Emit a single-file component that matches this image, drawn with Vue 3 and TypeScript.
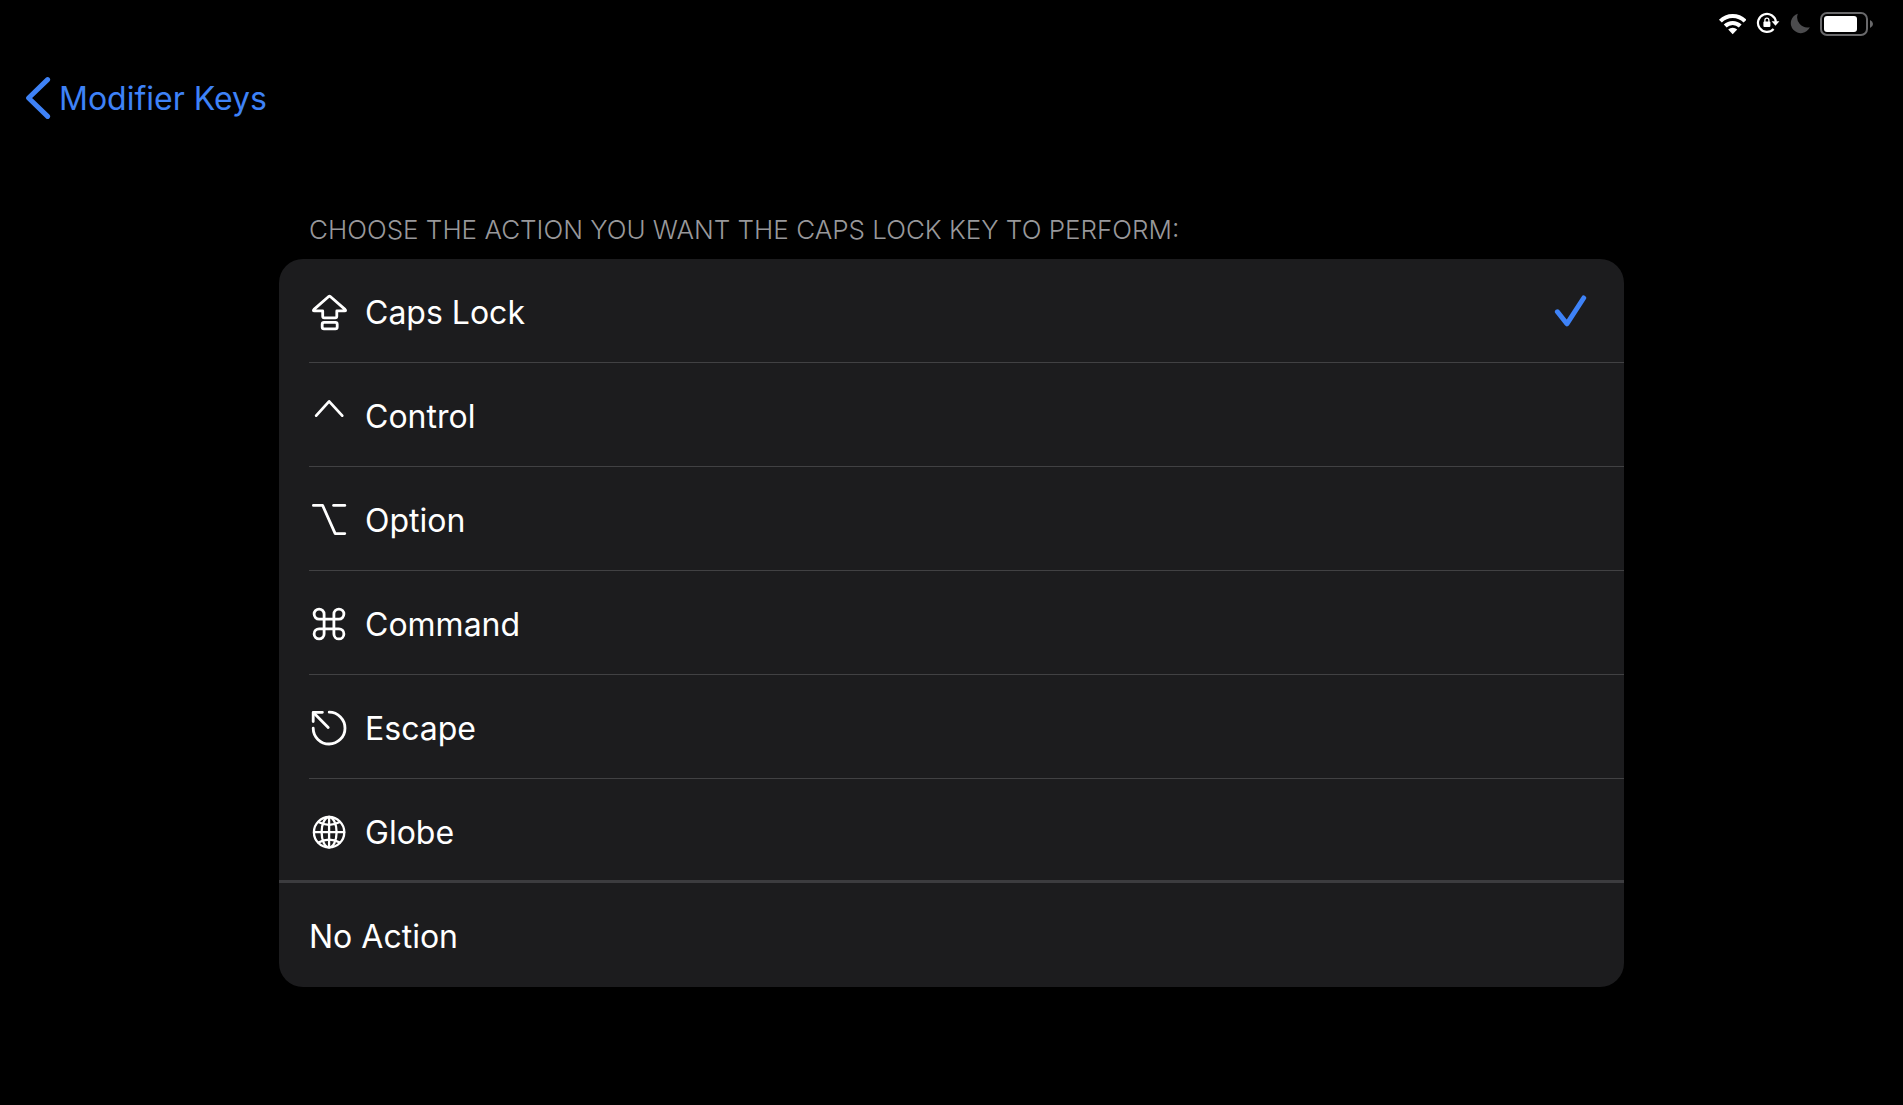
<script setup lang="ts">
import { ref } from 'vue'

interface Action {
  id: string
  label: string
  paths: string[]
}

const actions: Action[] = [
  {
    id: 'caps-lock',
    label: 'Caps Lock',
    paths: [
      'M19.7 4.5Q20.5 3.8 21.3 4.5L36 17.4Q37.4 18.9 35.6 18.9H27.8V24.2Q27.8 25.8 26.2 25.8H15.3Q13.7 25.8 13.7 24.2V18.9H5.4Q3.6 18.9 5 17.4Z',
      'M15 30.4H26.4Q28.2 30.4 28.2 32.2V35Q28.2 36.8 26.4 36.8H15Q13.2 36.8 13.2 35V32.2Q13.2 30.4 15 30.4Z',
    ],
  },
  { id: 'control', label: 'Control', paths: ['M7.2 19.6L20.1 5.4L33.2 19.6'] },
  { id: 'option', label: 'Option', paths: ['M4.4 5.4H13.6L26.2 33.6H35.8', 'M24.6 5.4H35.8'] },
  {
    id: 'command',
    label: 'Command',
    paths: [
      'M15.1 10.1V29.9A5 5 0 1 1 10.1 24.9H29.9A5 5 0 1 1 24.9 29.9V10.1A5 5 0 1 1 29.9 15.1H10.1A5 5 0 1 1 15.1 10.1Z',
    ],
  },
  {
    id: 'escape',
    label: 'Escape',
    paths: ['M20.2 4.2A15.9 15.9 0 1 1 4.2 20.2', 'M19.2 19.6L4.6 4.8', 'M13.4 4.3H4.2V13.6'],
  },
  {
    id: 'globe',
    label: 'Globe',
    paths: [
      'M4.9 20.2A15.2 15.2 0 1 0 35.3 20.2A15.2 15.2 0 1 0 4.9 20.2Z',
      'M12.6 20.2A7.5 15.2 0 1 0 27.6 20.2A7.5 15.2 0 1 0 12.6 20.2Z',
      'M20.1 5V35.4',
      'M5 20.2H35.2',
      'M9.4 10Q20.1 15.6 30.8 10',
      'M9.4 30.4Q20.1 24.8 30.8 30.4',
    ],
  },
  { id: 'none', label: 'No Action', paths: [] },
]

const selected = ref('caps-lock')
</script>

<template>
  <div class="screen">
    <header class="status">
      <svg width="28" height="24" viewBox="0 0 28 24" role="img" aria-label="Wi-Fi">
        <g fill="none" stroke="#fff" stroke-width="4">
          <path d="M2.4 9.2A17.2 17.2 0 0 1 27 9.2" />
          <path d="M7.2 14A10.6 10.6 0 0 1 22.2 14" />
        </g>
        <path d="M14.7 22.2L10.2 17.6A6.6 6.6 0 0 1 19.2 17.6Z" fill="#fff" />
      </svg>
      <svg width="24" height="24" viewBox="0 0 24 24" role="img" aria-label="Rotation locked">
        <path d="M17.6 17A9 9 0 1 1 19.9 9.8" fill="none" stroke="#fff" stroke-width="2.2" />
        <path d="M15.6 9.2H23.4L19.5 13.8Z" fill="#fff" />
        <rect x="7.4" y="9.4" width="7" height="5.6" rx="1" fill="#fff" />
        <path d="M8.9 10V8.2A2 2 0 0 1 12.9 8.2V10" fill="none" stroke="#fff" stroke-width="1.3" />
      </svg>
      <svg width="20" height="24" viewBox="0 0 20 24" role="img" aria-label="Do Not Disturb">
        <path d="M7.8 1.8A9.9 9.9 0 1 0 19.8 15.2A10.2 10.2 0 0 1 7.8 1.8Z" fill="#4c4c4e" />
      </svg>
      <svg width="53" height="24" viewBox="0 0 53 24" role="img" aria-label="Battery">
        <rect x="1" y="1" width="46" height="22" rx="6" fill="none" stroke="#69696b" stroke-width="2" />
        <rect x="4" y="4" width="33" height="16" rx="3" fill="#fff" />
        <path d="M50 8Q53 9.4 53 12T50 16Z" fill="#69696b" />
      </svg>
    </header>

    <nav class="nav">
      <a class="back" href="#">
        <svg width="28" height="44" viewBox="0 0 28 44" aria-hidden="true">
          <path d="M24.6 3.6L5.6 22L24.6 40.4" />
        </svg>
        <span>Modifier Keys</span>
      </a>
    </nav>

    <main class="content">
      <fieldset class="group">
        <legend class="title">CHOOSE THE ACTION YOU WANT THE CAPS LOCK KEY TO PERFORM:</legend>
        <div class="card">
          <label
            v-for="action in actions"
            :key="action.id"
            class="row"
            :class="{ last: action.id === 'none', end: action.id === 'globe' }"
          >
            <input v-model="selected" type="radio" name="action" :value="action.id" class="radio" />
            <span class="body">
              <svg v-if="action.paths.length" class="icon" :class="action.id" viewBox="0 0 40 40" aria-hidden="true">
                <path v-for="d in action.paths" :key="d" :d="d" />
              </svg>
              <span class="label">{{ action.label }}</span>
              <svg v-if="selected === action.id" class="check" viewBox="0 0 40 40" aria-hidden="true">
                <path d="M3.4 19.8L12.9 31.8L29.7 6" />
              </svg>
            </span>
          </label>
        </div>
      </fieldset>
    </main>
  </div>
</template>

<style>
body {
  background: #000;
}
</style>

<style scoped>
.screen {
  min-height: 100vh;
  background: #000;
  color: #fff;
  font-family: Inter, Roboto, 'Liberation Sans', sans-serif;
  font-size: 32px;
  line-height: 41px;
}

.status {
  display: flex;
  align-items: center;
  justify-content: flex-end;
  gap: 10px;
  height: 48px;
  padding: 0 30px;
}

.nav {
  display: flex;
  align-items: center;
  height: 100px;
  padding: 0 23px;
}

.back {
  display: flex;
  align-items: center;
  gap: 8px;
  color: #3e82f7;
  text-decoration: none;
}

.back path {
  fill: none;
  stroke: #3e82f7;
  stroke-width: 5;
  stroke-linecap: round;
  stroke-linejoin: round;
}

.content {
  max-width: 1345px;
  margin: 0 auto;
  padding: 66px 0;
}

.group {
  min-width: 0;
  margin: 0;
  padding: 0;
  border: 0;
}

.title {
  padding: 0 30px 13px;
  color: #98989b;
  font-size: 26px;
  font-weight: 300;
  line-height: 32px;
}

.card {
  overflow: hidden;
  border-radius: 24px;
  background: #1c1c1e;
}

.row {
  display: flex;
  padding-left: 30px;
}

.row.end {
  box-shadow: inset 0 -3px #3c3c3f;
}

.radio {
  appearance: none;
  width: 0;
  height: 0;
  margin: 0;
}

.body {
  box-sizing: border-box;
  display: flex;
  flex: 1;
  align-items: center;
  gap: 16px;
  min-height: 104px;
  padding: 2px 30px 0 0;
  box-shadow: inset 0 -1px #414143;
}

.end .body,
.last .body {
  box-shadow: none;
}

.label {
  flex: 1;
}

.icon,
.check {
  flex: none;
  width: 40px;
  height: 40px;
  fill: none;
  stroke: #fff;
  stroke-width: 2.8;
  stroke-linecap: round;
  stroke-linejoin: round;
}

.globe {
  stroke-width: 2.3;
}

.check {
  stroke: #3e82f7;
  stroke-width: 5;
}
</style>
